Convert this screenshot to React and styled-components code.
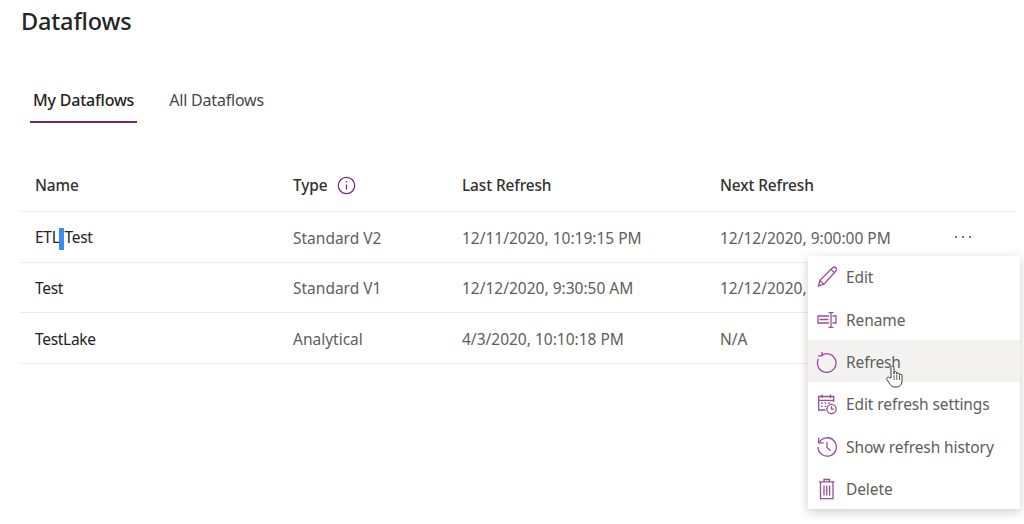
import React from "react";
import styled, { createGlobalStyle } from "styled-components";

const Global = createGlobalStyle`
  html, body { margin: 0; padding: 0; background: #fff; overflow: hidden; }
  body { font-family: "Noto Sans", "Open Sans", "Liberation Sans", sans-serif; }
`;
const Page = styled.div`
  position: relative;
  width: 1024px;
  height: 524px;
  overflow: hidden;
  padding: 3px 8px 0 20px;
  box-sizing: border-box;
`;
const Title = styled.h1`
  margin: 0 0 0 1px;
  font-size: 23.5px;
  line-height: 36px;
  font-weight: 500;
  color: #252423;
  letter-spacing: -0.17px;
`;
const Tabs = styled.div`
  display: flex;
  gap: 29px;
  margin: 39px 0 0 10px;
`;
const Tab = styled.div`
  padding: 0 3px;
  height: 45px;
  line-height: 44px;
  box-sizing: border-box;
  font-size: 16px;
  letter-spacing: -0.2px;
  font-weight: ${p => (p.$active ? 500 : 400)};
  color: ${p => (p.$active ? "#252423" : "#484644")};
  border-bottom: 2px solid ${p => (p.$active ? "#742774" : "transparent")};
`;
const Table = styled.div`
  margin-top: 38px;
`;
const Row = styled.div`
  display: grid;
  grid-template-columns: 258px 169px 258px 1fr;
  align-items: center;
  height: ${p => (p.$header ? "51px" : "50.6px")};
  padding: ${p => (p.$header ? "0 0 2px 15px" : "2px 0 0 15px")};
  box-sizing: border-box;
  border-bottom: 1px solid #edebe9;
`;
const HeadCell = styled.div`
  display: flex;
  align-items: center;
  gap: 10px;
  font-size: 15.4px;
  font-weight: 500;
  letter-spacing: -0.1px;
  color: #323130;
`;
const NameCell = styled.div`
  font-size: 15.5px;
  letter-spacing: -0.3px;
  color: #252423;
`;
const Cell = styled.div`
  font-size: 15.5px;
  color: #605e5c;
  white-space: nowrap;
`;
const Caret = styled.span`
  display: inline-block;
  width: 5px;
  height: 22px;
  vertical-align: middle;
  background: #3b8cf5;
`;
const More = styled.div`
  position: absolute;
  left: 955px;
  top: 236px;
  display: flex;
  gap: 4.8px;
`;
const Dot = styled.i`
  width: 2.2px;
  height: 2.2px;
  border-radius: 50%;
  background: #4a3a6a;
`;
const Menu = styled.div`
  position: absolute;
  left: 808px;
  top: 256px;
  width: 212px;
  height: 253px;
  background: #fff;
  box-shadow: 0 3px 10px rgba(0, 0, 0, 0.2);
`;
const MenuList = styled.div`
  margin-top: -0.4px;
`;
const Item = styled.div`
  display: flex;
  align-items: center;
  gap: 8px;
  height: ${p => (p.$hover ? "42px" : "42.4px")};
  margin-bottom: ${p => (p.$hover ? "0.4px" : "0")};
  padding: 1px 0 0 8px;
  box-sizing: border-box;
  font-size: 15.5px;
  letter-spacing: -0.1px;
  color: #605e5c;
  background: ${p => (p.$hover ? "#f3f2f1" : "transparent")};
`;
const Icon = styled.svg`
  width: 22px;
  height: 22px;
  flex: none;
  fill: none;
  stroke: #9a4d9a;
  stroke-width: 1.3;
`;
const Hand = styled.svg`
  position: absolute;
  left: 886px;
  top: 365px;
  width: 18px;
  height: 23px;
`;

const InfoIcon = () => (
  <svg width="19" height="19" viewBox="0 0 19 19" fill="none" stroke="#742774" strokeWidth="1.2">
    <circle cx="9.5" cy="9.5" r="8.2" />
    <path d="M9.5 8.5v5" />
    <path d="M9.5 5.2v1.3" />
  </svg>
);

const icons = {
  edit: (
    <>
      <path d="M2.5 20l1.4-5.6L16.6 1.8c.9-.9 2.3-.9 3.2 0s.9 2.3 0 3.2L7.9 18.200z" />
      <path d="M3.900 14.400l4 3.800M15 3.400l3.700 3.700" />
    </>
  ),
  rename: (
    <>
      <path d="M13 7H2v7h11" />
      <path d="M3.500 10.500h9M16.500 7H20v7h-3.500" />
      <path d="M15 4v14M12.500 3.600h5M12.500 18.400h5" />
    </>
  ),
  refresh: (
    <>
      <path d="M5.500 4.400A9.300 9.300 0 1 1 2.400 8" />
      <path d="M6 .9v4H2" />
    </>
  ),
  calendar: (
    <>
      <path d="M9.500 17H2.700V3.500h15V9" />
      <path d="M2.700 7.400h15M6 1.500v3.500M14.500 1.500v3.500" />
      <path d="M5 10h1.600M8.600 10h1.600M12.200 10h1.600M5 13.300h1.600M8.600 13.300h1.600" />
      <circle cx="15.500" cy="16" r="4.600" />
      <path d="M15.500 13.200v3h2.400" />
    </>
  ),
  history: (
    <>
      <path d="M3.200 6.400A9.200 9.200 0 1 1 2 11" />
      <path d="M2.600 1.800v5h5" />
      <path d="M11 6v5.500l3.500 3.300" />
    </>
  ),
  trash: (
    <>
      <path d="M3 3.800h15.500M4.500 3.800V20.600h12.500V3.800M8 3.600V1.500h5.500v2.100" />
      <path d="M8 7.500v10M10.800 7.500v10M13.600 7.500v10" />
    </>
  ),
};

const menu = [
  ["edit", "Edit"],
  ["rename", "Rename"],
  ["refresh", "Refresh", true],
  ["calendar", "Edit refresh settings"],
  ["history", "Show refresh history"],
  ["trash", "Delete"],
];

const rows = [
  ["ETL", "Test", "Standard V2", "12/11/2020, 10:19:15 PM", "12/12/2020, 9:00:00 PM"],
  ["Test", "", "Standard V1", "12/12/2020, 9:30:50 AM", "12/12/2020, 9:00:00 PM"],
  ["TestLake", "", "Analytical", "4/3/2020, 10:10:18 PM", "N/A"],
];

export default function App() {
  return (
    <Page>
      <Global />
      <Title>Dataflows</Title>
      <Tabs>
        <Tab $active>My Dataflows</Tab>
        <Tab>All Dataflows</Tab>
      </Tabs>
      <Table>
        <Row $header>
          <HeadCell>Name</HeadCell>
          <HeadCell>Type <InfoIcon /></HeadCell>
          <HeadCell>Last Refresh</HeadCell>
          <HeadCell>Next Refresh</HeadCell>
        </Row>
        {rows.map(r => (
          <Row key={r[0]}>
            <NameCell>{r[0]}{r[1] && <><Caret />{r[1]}</>}</NameCell>
            <Cell>{r[2]}</Cell>
            <Cell>{r[3]}</Cell>
            <Cell>{r[4]}</Cell>
          </Row>
        ))}
      </Table>
      <More><Dot /><Dot /><Dot /></More>
      <Menu>
        <MenuList>
          {menu.map(([icon, label, hover]) => (
            <Item key={label} $hover={hover}>
              <Icon viewBox="0 0 22 22">{icons[icon]}</Icon>
              {label}
            </Item>
          ))}
        </MenuList>
      </Menu>
      <Hand viewBox="0 0 18 23">
        <path d="M5 13V2.800c0-2 3-2 3 0V9l.1-1.200c0-1.700 2.700-1.700 2.700 0V9.300c0-1.500 2.700-1.500 2.700 0v1c0-1.300 2.500-1.300 2.500.2v5c0 3.500-1.500 6-5 6.500H8.500c-2 0-3.200-1-4.200-2.500L1 14.500c-1-1.800 1.200-3.200 2.500-1.800z" fill="#fff" stroke="#3a3a3a" strokeWidth="1" />
        <path d="M8 10v5M10.800 10v5M13.500 10.500v4.500" stroke="#3a3a3a" strokeWidth="0.8" fill="none" />
      </Hand>
    </Page>
  );
}
